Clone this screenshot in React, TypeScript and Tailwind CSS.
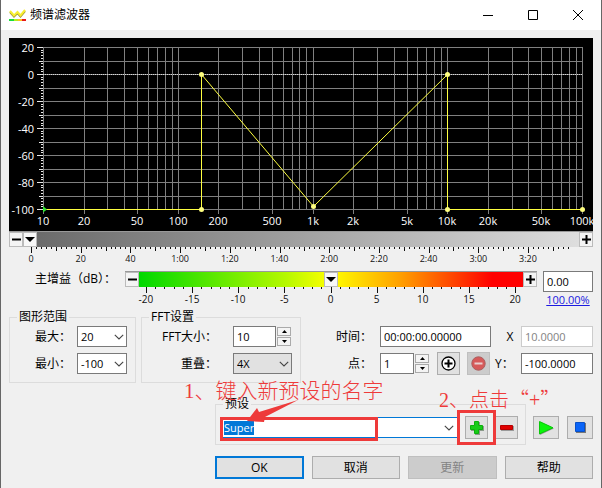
import { useEffect, useRef, useState } from 'react';
import type { ReactNode } from 'react';

const DB_MAX = 20;
const DB_MIN = -100;

// plot area inside the 584 x 193 graph
const PLOT = { left: 34, right: 573, top: 9, bottom: 171 };

const freqX = (hz: number) => Math.round(PLOT.left + (Math.log10(hz / 10) / 4) * (PLOT.right - PLOT.left));
const dbY = (db: number) =>
  Math.round(PLOT.top + ((DB_MAX - db) / (DB_MAX - DB_MIN)) * (PLOT.bottom - PLOT.top));

const freqLines = [10, 100, 1000, 10000].flatMap((decade) =>
  [1, 2, 3, 4, 5, 6, 7, 8, 9].map((n) => n * decade)
).concat(100000);

const dbLines = Array.from({ length: 13 }, (_, i) => DB_MAX - i * 10);
const dbTicks = Array.from({ length: 61 }, (_, i) => DB_MAX - i * 2);

const freqLabels: [number, string][] = [
  [10, '10'], [20, '20'], [50, '50'], [100, '100'], [200, '200'], [500, '500'], [1000, '1k'],
  [2000, '2k'], [5000, '5k'], [10000, '10k'], [20000, '20k'], [50000, '50k'], [100000, '100k']
];

const points: [number, number][] = [
  [10, -100], [148, -100], [148, 0], [1000, -98], [10000, 0], [10000, -100], [100000, -100]
];

const FilterGraph = () => (
  <svg
    viewBox="0 0 584 193"
    className="block w-full h-auto bg-black font-['Open_Sans','Noto_Sans',sans-serif] text-[11px]"
    shapeRendering="crispEdges"
  >
    <g stroke="#808080">
      {freqLines.map((hz) => (
        <line key={hz} x1={freqX(hz) + 0.5} x2={freqX(hz) + 0.5} y1={PLOT.top} y2={PLOT.bottom} />
      ))}
      {freqLabels.map(([hz]) => (
        <line key={hz} x1={freqX(hz) + 0.5} x2={freqX(hz) + 0.5} y1={PLOT.bottom} y2={PLOT.bottom + 5} />
      ))}
      {dbLines.map((db) => (
        <line key={db} x1={PLOT.left} x2={PLOT.right} y1={dbY(db) + 0.5} y2={dbY(db) + 0.5} />
      ))}
    </g>
    <line x1={PLOT.left} x2={PLOT.right} y1={dbY(0) + 0.5} y2={dbY(0) + 0.5} stroke="#d8d8d8" strokeDasharray="1 1" />
    <g stroke="#e8e8e8">
      {dbTicks.map((db) => (
        <line
          key={db}
          x1={PLOT.left - (db % 20 === 0 ? 6 : db % 10 === 0 ? 4 : 2)}
          x2={PLOT.left}
          y1={dbY(db) + 0.5}
          y2={dbY(db) + 0.5}
        />
      ))}
    </g>
    <polyline
      points={points.map(([hz, db]) => `${freqX(hz) + 0.5},${dbY(db) + 0.5}`).join(' ')}
      fill="none"
      stroke="#ffff40"
      shapeRendering="geometricPrecision"
    />
    <g fill="#ffff80" shapeRendering="auto">
      {points.slice(1).map(([hz, db]) => (
        <circle key={`${hz}:${db}`} cx={freqX(hz) + 0.5} cy={dbY(db) + 0.5} r="2.5" />
      ))}
      <path d="M34 168l4 3.500-4 3z" fill="#30e030" />
    </g>
    <g fill="#fff" textAnchor="end">
      {dbLines.filter((db) => db % 20 === 0).map((db) => (
        <text key={db} x="25" y={dbY(db) + 5}>{db}</text>
      ))}
    </g>
    <g fill="#fff" textAnchor="middle">
      {freqLabels.map(([hz, label]) => (
        <text key={hz} x={freqX(hz)} y="187">{label}</text>
      ))}
    </g>
  </svg>
);

const timeLabels = ['0', '20', '40', '1:00', '1:20', '1:40', '2:00', '2:20', '2:40', '3:00', '3:20'];

const TimeRuler = () => (
  <svg viewBox="0 0 584 24" className="block w-full h-auto font-['Open_Sans',sans-serif] text-[9px]">
    {Array.from({ length: 109 }, (_, i) => {
      const x = Math.round(22 + i * 4.97) + 0.5;
      return (
        <line
          key={i}
          x1={x}
          x2={x}
          y1="0"
          y2={i % 10 === 0 ? 6 : i % 5 === 0 ? 4 : 2}
          stroke="#111"
        />
      );
    })}
    {timeLabels.map((label, i) => (
      <text key={label} x={22 + i * 49.7} y="15" textAnchor="middle" fill="#111">{label}</text>
    ))}
  </svg>
);

const GainRuler = () => (
  <svg viewBox="0 0 412 22" className="block w-full h-auto font-['Open_Sans',sans-serif] text-[10px]">
    {Array.from({ length: 41 }, (_, i) => {
      const x = Math.round(21 + i * 9.23) + 0.5;
      return <line key={i} x1={x} x2={x} y1="0" y2={i % 5 === 0 ? 6 : 2} stroke="#111" />;
    })}
    {[-20, -15, -10, -5, 0, 5, 10, 15, 20].map((db) => (
      <text key={db} x={205.500 + db * 9.23} y="16" textAnchor="middle" fill="#111">{db}</text>
    ))}
  </svg>
);

const Sign = ({ plus = false }: { plus?: boolean }) => (
  <svg viewBox="0 0 9 9" className="size-[9px]">
    <path d={plus ? 'M0 3.500h3.500V0h2v3.500H9v2H5.500V9h-2V5.500H0z' : 'M0 3.500h9v2H0z'} />
  </svg>
);

interface RangeBarProps {
  label: string;
  min: number;
  max: number;
  initial: number;
  track: string;
}

const RangeBar = ({ label, min, max, initial, track }: RangeBarProps) => {
  const [value, setValue] = useState(initial);
  const step = (by: number) => setValue((v) => Math.min(max, Math.max(min, v + by)));
  const ratio = (value - min) / (max - min);

  return (
    <div className="flex h-4 border-t border-[#999]">
      <button aria-label="减小" onClick={() => step(-1)} className="flex w-[14px] items-center justify-center border border-[#bbb] bg-[#f4f4f4]">
        <Sign />
      </button>
      <div className="relative flex-1">
        <input
          type="range"
          aria-label={label}
          min={min}
          max={max}
          value={value}
          onChange={(e) => setValue(Number(e.target.value))}
          className={`block h-full w-full appearance-none [&::-webkit-slider-thumb]:h-[15px] [&::-webkit-slider-thumb]:w-[14px] [&::-webkit-slider-thumb]:appearance-none ${track}`}
        />
        <div
          className="pointer-events-none absolute inset-y-0 flex w-[14px] items-center justify-center border border-[#bbb] bg-[#f8f8f8]"
          style={{ left: `calc((100% - 14px) * ${ratio})` }}
        >
          <svg viewBox="0 0 10 5" className="h-[5px] w-[10px] shrink-0"><path d="M0 0h10L5 5z" /></svg>
        </div>
      </div>
      <button aria-label="增大" onClick={() => step(1)} className="flex w-[14px] items-center justify-center border border-[#bbb] bg-[#f4f4f4]">
        <Sign plus />
      </button>
    </div>
  );
};

const fieldClass = 'h-[21px] border border-[#7a7a7a] bg-white px-[3px] text-[11px] leading-[16px] outline-none';

const Chevron = () => (
  <svg viewBox="0 0 10 6" className="pointer-events-none h-[6px] w-[10px]" fill="none" stroke="#444" strokeWidth="1.1">
    <path d="M.8.8L5 5 9.200.8" />
  </svg>
);

const Select = ({ id, value, options, className }: { id: string; value: string; options: string[]; className: string }) => (
  <div className={`relative h-[21px] ${className}`}>
    <select id={id} defaultValue={value} className="h-full w-full appearance-none border border-[#7a7a7a] pl-[3px] text-[11px] leading-[16px]">
      {options.map((option) => <option key={option}>{option}</option>)}
    </select>
    <span className="pointer-events-none absolute inset-y-0 right-[3px] flex items-center"><Chevron /></span>
  </div>
);

const Spinner = () => (
  <div className="flex h-[21px] w-[14px] flex-col gap-px py-px">
    <button aria-label="增加" className="flex flex-1 items-center justify-center border border-[#aaa] bg-[#f4f4f4]">
      <svg viewBox="0 0 5 3" className="h-[3px] w-[5px]"><path d="M0 3L2.500 0 5 3z" /></svg>
    </button>
    <button aria-label="减少" className="flex flex-1 items-center justify-center border border-[#aaa] bg-[#f4f4f4]">
      <svg viewBox="0 0 5 3" className="h-[3px] w-[5px]"><path d="M0 0h5L2.500 3z" /></svg>
    </button>
  </div>
);

const Group = ({ title, className, children }: { title: string; className: string; children: ReactNode }) => (
  <fieldset className={`min-w-0 border border-[#dcdcdc] ${className}`}>
    <legend className="ml-[7px] px-[2px] leading-[16px]">{title}</legend>
    {children}
  </fieldset>
);

const IconButton = ({ label, className = 'w-[23px]', disabled, children }: { label: string; className?: string; disabled?: boolean; children: ReactNode }) => (
  <button
    aria-label={label}
    disabled={disabled}
    className={`flex h-[23px] shrink-0 items-center justify-center border ${disabled ? 'border-[#bfbfbf] bg-[#cccccc]' : 'border-[#adadad] bg-[#e1e1e1]'} ${className}`}
  >
    {children}
  </button>
);

const TitleBar = () => (
  <header className="flex h-[30px] items-center bg-white pl-2">
    <svg viewBox="0 0 17 13" className="h-[13px] w-[17px]">
      <path d="M1 3l4 4.500 3.500-3.500 3 3.500L16 2" fill="none" stroke="#9a8f30" strokeWidth="2" />
      <path d="M1 2l4 4.500L8.500 3l3 3.500L16 1" fill="none" stroke="#f7ee30" strokeWidth="2" />
      <path d="M0 10h5v2H0z" fill="#19dc3c" />
      <path d="M5 10h4v2H5z" fill="#b4ec20" />
      <path d="M9 10h4v2H9z" fill="#ffc020" />
      <path d="M13 10h4v2h-4z" fill="#e81818" />
    </svg>
    <h1 className="ml-1 flex-1 text-[12px]">频谱滤波器</h1>
    <button aria-label="最小化" className="flex h-full w-[45px] items-center justify-center">
      <svg viewBox="0 0 10 10" className="size-[10px]"><path d="M0 5h10v1H0z" /></svg>
    </button>
    <button aria-label="最大化" className="flex h-full w-[45px] items-center justify-center">
      <svg viewBox="0 0 10 10" className="size-[10px]" fill="none" stroke="#000"><path d="M.5.5h9v9h-9z" /></svg>
    </button>
    <button aria-label="关闭" className="flex h-full w-[46px] items-center justify-center">
      <svg viewBox="0 0 10 10" className="size-[10px]" fill="none" stroke="#000"><path d="M0 0l10 10M10 0L0 10" /></svg>
    </button>
  </header>
);

const PresetCombo = () => {
  const input = useRef<HTMLInputElement>(null);

  useEffect(() => {
    input.current?.focus();
    input.current?.select();
  }, []);

  return (
    <div className="relative flex h-[21px] flex-1 border border-[#0078d7] bg-white">
      <input
        ref={input}
        aria-label="预设名称"
        defaultValue="Super"
        className="min-w-0 flex-1 pl-[3px] text-[11px] leading-[14px] outline-none selection:bg-[#0078d7] selection:text-white"
      />
      <button aria-label="展开" className="flex w-[18px] items-center justify-center"><Chevron /></button>
      <div className="pointer-events-none absolute -top-px -left-px h-6 w-[158px] border-[3px] border-[#ee3a3a]" />
      <p className="pointer-events-none absolute -top-[42px] -left-[37px] text-[21px] leading-[28px] font-light whitespace-nowrap text-[#ee3a3a]">
        <span className="font-['Liberation_Serif',serif]">1</span>、键入新预设的名字
      </p>
      <svg viewBox="0 0 52 24" className="pointer-events-none absolute -top-[18px] left-[26px] h-6 w-[52px]">
        <path d="M0 21L10 8l2 4L51 0 18 17l-1 5z" fill="#ee3a3a" />
      </svg>
    </div>
  );
};

const pushClass = 'h-[23px] border text-[12px] leading-[18px]';

const App = () => (
  <div className="min-h-screen border-x border-[#666] bg-[#f0f0f0] font-['Open_Sans','Noto_Sans_CJK_SC',sans-serif] text-[12px] text-black">
    <TitleBar />
    <main className="px-2 pt-2 pb-[9px]">
      <FilterGraph />
      <RangeBar label="时间位置" min={0} max={220} initial={0} track="bg-linear-to-r from-[#686868] to-[#dedede]" />
      <TimeRuler />

      <div className="flex">
        <label htmlFor="gain" className="w-[116px] shrink-0 pl-[26px] leading-[16px] whitespace-nowrap">主增益（dB）：</label>
        <div className="min-w-0 flex-1">
          <RangeBar
            label="主增益"
            min={-20}
            max={20}
            initial={0}
            track="bg-[linear-gradient(90deg,#00d800,#b4f800_38%,#ffff00_50%,#ffa000_68%,#ff0000_92%)]"
          />
          <GainRuler />
        </div>
        <div className="ml-[6px] w-[50px] shrink-0">
          <input id="gain" defaultValue="0.00" className={`${fieldClass} block w-full`} />
          <a href="#percent" className="block text-center text-[11px] leading-[16px] text-[#1a1ae0] underline">100.00%</a>
        </div>
      </div>

      <div className="flex">
        <Group title="图形范围" className="w-[127px]">
          <div className="grid grid-cols-[1fr_50px] items-center gap-x-1 gap-y-[6px] pt-px pr-2 pb-2 pl-[25px]">
            <label htmlFor="max">最大：</label>
            <Select id="max" value="20" options={['20', '0', '-20']} className="bg-white" />
            <label htmlFor="min">最小：</label>
            <Select id="min" value="-100" options={['-100', '-80', '-60']} className="bg-white" />
          </div>
        </Group>

        <Group title="FFT设置" className="ml-[5px] w-[160px]">
          <div className="grid grid-cols-[1fr_59px] items-center gap-x-4 gap-y-[6px] pt-px pr-2 pb-2">
            <label htmlFor="fft" className="text-right whitespace-nowrap">FFT大小：</label>
            <div className="flex gap-px">
              <input id="fft" defaultValue="10" className={`${fieldClass} w-[43px]`} />
              <Spinner />
            </div>
            <label htmlFor="overlap" className="text-right">重叠：</label>
            <Select id="overlap" value="4X" options={['2X', '4X', '8X']} className="bg-[#e1e1e1]" />
          </div>
        </Group>

        <div className="grid flex-1 grid-cols-[1fr_111px_22px_72px] content-start items-center gap-x-1 gap-y-[6px] pt-[17px]">
          <label htmlFor="time" className="pr-1 text-right">时间：</label>
          <input id="time" defaultValue="00:00:00.00000" className={`${fieldClass} w-full`} />
          <label htmlFor="x" className="pl-2 text-center">X</label>
          <input id="x" defaultValue="10.0000" disabled className={`${fieldClass} w-full border-[#cccccc] text-[#838383]`} />

          <label htmlFor="point" className="pr-1 text-right">点：</label>
          <div className="flex h-[21px] items-center">
            <input id="point" defaultValue="1" className={`${fieldClass} mr-px w-[34px]`} />
            <Spinner />
            <span className="ml-2 flex gap-[7px]">
              <IconButton label="添加点">
                <svg viewBox="0 0 15 15" className="size-[15px]" fill="#fff" stroke="#000">
                  <circle cx="7.5" cy="7.5" r="6.5" strokeWidth="1.3" />
                  <path d="M3.500 7.500h8M7.500 3.500v8" strokeWidth="2" />
                </svg>
              </IconButton>
              <IconButton label="删除点" disabled>
                <svg viewBox="0 0 15 15" className="size-[15px]">
                  <circle cx="7.5" cy="7.5" r="6.700" fill="#d65a5a" stroke="#a86060" />
                  <path d="M3.500 6.500h8v2h-8z" fill="#e8d0d0" />
                </svg>
              </IconButton>
            </span>
          </div>
          <label htmlFor="y" className="whitespace-nowrap">Y：</label>
          <input id="y" defaultValue="-100.0000" className={`${fieldClass} w-full`} />
        </div>
      </div>

      <div className="mt-[13px] ml-[206px] flex">
        <Group title="预设" className="flex-1">
          <div className="flex items-center pt-1 pr-[7px] pb-[5px] pl-1">
            <PresetCombo />
            <div className="relative mr-[7px] ml-[6px]">
              <IconButton label="添加预设">
                <svg viewBox="0 0 14 14" className="size-[14px]">
                  <path d="M5 1h5v4h4v5h-4v4H5v-4H1V5h4z" fill="#8a9a8a" />
                  <path d="M4.500.5h4v4h4v4h-4v4h-4v-4h-4v-4h4z" fill="#18cc18" stroke="#0cb00c" />
                </svg>
              </IconButton>
              <div className="pointer-events-none absolute -inset-x-[8px] -inset-y-[6px] border-[3px] border-[#ee3a3a]" />
              <p className="pointer-events-none absolute -top-[31px] -left-[26px] text-[20px] leading-[28px] font-light whitespace-nowrap text-[#ee3a3a]">
                <span className="font-['Liberation_Serif',serif]">2</span>
                <span className="font-['Noto_Sans_CJK_SC',sans-serif]">、点击“</span>
                <span className="font-['Liberation_Serif',serif]">+</span>
                <span className="font-['Noto_Sans_CJK_SC',sans-serif]">”</span>
              </p>
            </div>
            <IconButton label="删除预设">
              <svg viewBox="0 0 14 6" className="h-[6px] w-[14px]">
                <path d="M1 1h13v5H1z" fill="#999" />
                <path d="M.5.5h12v4H.5z" fill="#e00000" stroke="#b80000" />
              </svg>
            </IconButton>
          </div>
        </Group>
        <div className="ml-[7px] flex gap-2 pt-[20px]">
          <IconButton label="播放" className="w-[26px]">
            <svg viewBox="0 0 15 14" className="h-[14px] w-[15px]">
              <path d="M1 1l14 6.500L1 14z" fill="#999" />
              <path d="M.5.5L14 6.800.5 13z" fill="#0cf50c" stroke="#08c808" />
            </svg>
          </IconButton>
          <IconButton label="停止" className="w-[26px]">
            <svg viewBox="0 0 11 11" className="size-[11px]">
              <path d="M1 1h10v10H1z" fill="#777" />
              <path d="M.5.5h9v9h-9z" fill="#0a64f8" stroke="#0850c8" />
            </svg>
          </IconButton>
        </div>
      </div>

      <footer className="mt-[11px] ml-[206px] grid grid-cols-4 gap-2">
        <button className={`${pushClass} border-2 border-[#0078d7] bg-[#e1e1e1]`}>OK</button>
        <button className={`${pushClass} border-[#adadad] bg-[#e1e1e1]`}>取消</button>
        <button disabled className={`${pushClass} border-[#bfbfbf] bg-[#cccccc] text-[#838383]`}>更新</button>
        <button className={`${pushClass} border-[#adadad] bg-[#e1e1e1]`}>帮助</button>
      </footer>
    </main>
  </div>
);

export default App;
